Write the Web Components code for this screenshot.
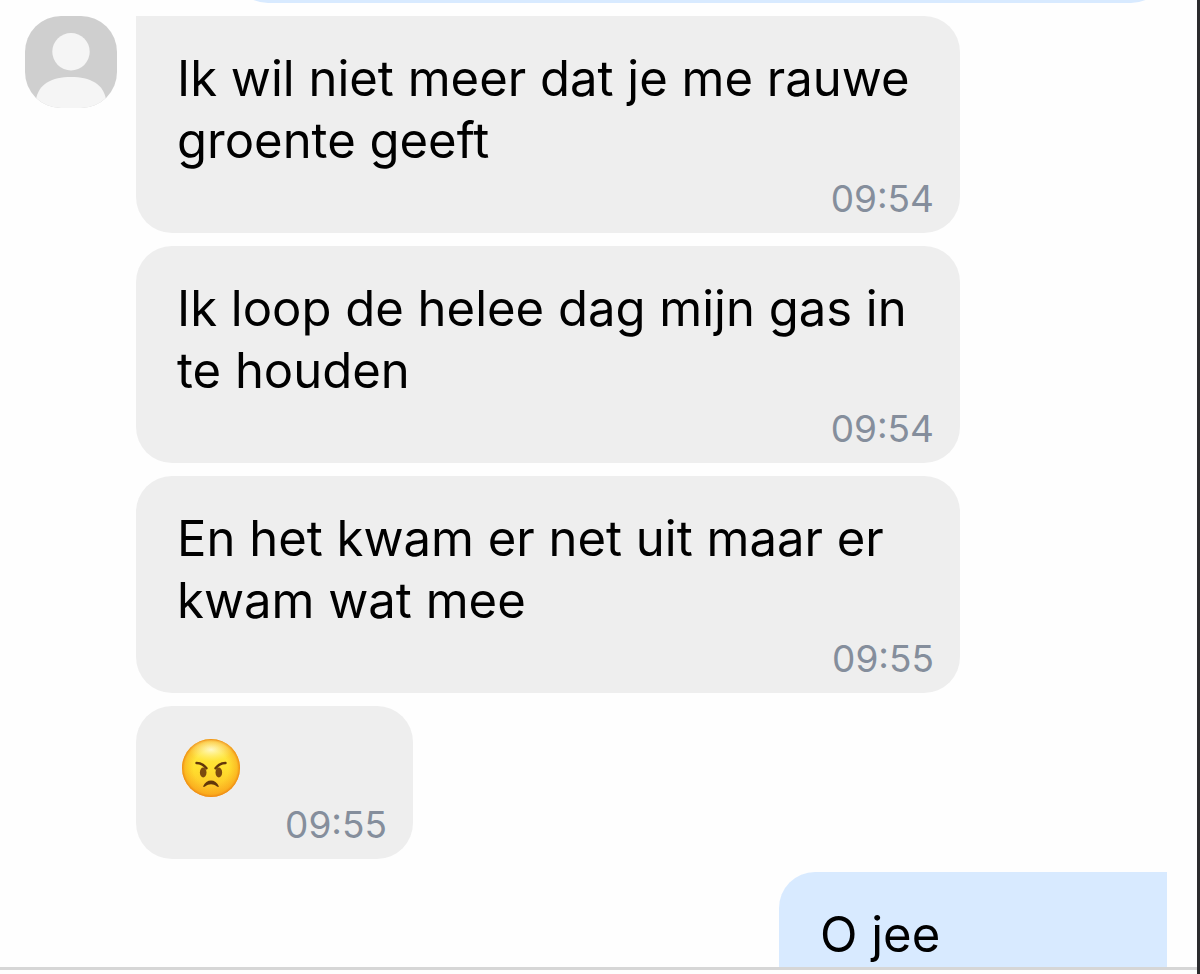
<!DOCTYPE html>
<html lang="nl">
<head>
<meta charset="utf-8">
<meta name="viewport" content="width=device-width, initial-scale=1">
<title>Chat</title>
<style>
  body {
    margin: 0;
    background: #fefefe;
    font-family: Inter, "Liberation Sans", sans-serif;
    color: #000;
  }
</style>
</head>
<body>
<chat-window>
  <chat-message side="sent" previous></chat-message>
  <chat-message side="received" first time="09:54">
    <user-avatar slot="avatar"></user-avatar>
    Ik wil niet meer dat je me rauwe groente geeft
  </chat-message>
  <chat-message side="received" time="09:54">Ik loop de helee dag mijn gas in te houden</chat-message>
  <chat-message side="received" time="09:55">En het kwam er net uit maar er kwam wat mee</chat-message>
  <chat-message side="received" short time="09:55"><angry-emoji></angry-emoji></chat-message>
  <chat-message side="sent" first short>O jee</chat-message>
</chat-window>

<script>
class ChatWindow extends HTMLElement {
  constructor() {
    super();
    this.attachShadow({ mode: "open" });
    this.shadowRoot.innerHTML = `
      <style>
        :host {
          display: flex;
          flex-direction: column;
          box-sizing: border-box;
          height: 100vh;
          border-right: 3px solid #2b2b2d;
        }
        .thread {
          flex: 1;
          min-height: 0;
          overflow: hidden;
          display: flex;
          flex-direction: column;
          gap: 13px;
        }
        footer {
          flex: none;
          height: 4px;
          border-top: 3px solid #d6d6d6;
        }
      </style>
      <main class="thread"><slot></slot></main>
      <footer></footer>
    `;
  }
}

class ChatMessage extends HTMLElement {
  constructor() {
    super();
    this.attachShadow({ mode: "open" });
    this.render();
  }

  render() {
    const time = this.getAttribute("time");
    this.shadowRoot.innerHTML = `
      <style>
        :host {
          display: flex;
          flex: none;
          gap: 19px;
          padding: 0 237px 0 25px;
        }
        .avatar {
          flex: none;
          width: 92px;
        }
        .bubble {
          flex: 1;
          display: flex;
          flex-direction: column;
          gap: 8px;
          box-sizing: border-box;
          min-height: 153px;
          padding: 32px 26px 15px 41px;
          border-radius: 36px;
          background: #eeeeee;
        }
        .text {
          font-size: 49px;
          line-height: 62px;
        }
        time {
          align-self: flex-end;
          font-size: 37px;
          line-height: 38px;
          color: #858e9c;
        }
        :host([first]) .bubble {
          border-top-left-radius: 0;
        }
        :host([short]) .bubble {
          flex: 0 0 277px;
        }
        :host([side="sent"]) {
          justify-content: flex-end;
          padding: 0 30px 0 232px;
        }
        :host([side="sent"]) .avatar {
          display: none;
        }
        :host([side="sent"]) .bubble {
          background: #d8eaff;
        }
        :host([side="sent"][short]) .bubble {
          flex-basis: 388px;
        }
        :host([side="sent"][first]) .bubble {
          border-radius: 36px 0 36px 36px;
        }
        /* scrolled out of view, only its lower edge shows */
        :host([previous]) {
          height: 3px;
          align-items: flex-end;
        }
      </style>
      <div class="avatar"><slot name="avatar"></slot></div>
      <div class="bubble">
        <div class="text"><slot></slot></div>
        ${time ? `<time>${time}</time>` : ""}
      </div>
    `;
  }
}

class UserAvatar extends HTMLElement {
  constructor() {
    super();
    this.attachShadow({ mode: "open" });
    this.shadowRoot.innerHTML = `
      <style>
        :host {
          display: block;
          height: 92px;
          border-radius: 36px;
          overflow: hidden;
          background: #cfcfcf;
        }
        svg { display: block; }
      </style>
      <svg width="92" height="92" viewBox="0 0 92 92" fill="#f5f5f5" aria-hidden="true">
        <circle cx="46" cy="35.700" r="18.700"/>
        <path d="M11 92V84C13 68 27 61 46 61S79 68 81 84V92Z"/>
      </svg>
    `;
  }
}

class AngryEmoji extends HTMLElement {
  constructor() {
    super();
    this.attachShadow({ mode: "open" });
    this.shadowRoot.innerHTML = `
      <style>
        :host {
          display: block;
          padding-left: 4px;
        }
        svg { display: block; }
      </style>
      <svg width="60" height="60" viewBox="0 0 60 60" role="img" aria-label="😠">
        <defs>
          <linearGradient id="face" x1="0" y1="0" x2="0" y2="1">
            <stop offset="0" stop-color="#ffef55"/>
            <stop offset=".5" stop-color="#ffe02f"/>
            <stop offset="1" stop-color="#fdb925"/>
          </linearGradient>
          <radialGradient id="rim" cx=".5" cy=".5" r=".5">
            <stop offset=".6" stop-color="#f9a01b" stop-opacity="0"/>
            <stop offset=".9" stop-color="#f79a16" stop-opacity=".5"/>
            <stop offset="1" stop-color="#ea7d10" stop-opacity=".9"/>
          </radialGradient>
          <radialGradient id="shine" cx=".5" cy=".4" r=".5">
            <stop offset="0" stop-color="#fff" stop-opacity=".7"/>
            <stop offset="1" stop-color="#fff59a" stop-opacity="0"/>
          </radialGradient>
        </defs>
        <circle cx="30" cy="30" r="29" fill="url(#face)"/>
        <circle cx="30" cy="30" r="29" fill="url(#rim)"/>
        <ellipse cx="30" cy="14" rx="22" ry="12" fill="url(#shine)"/>
        <ellipse cx="22.200" cy="34.500" rx="3.300" ry="4.900" fill="#7d4a0e"/>
        <ellipse cx="37.800" cy="34.500" rx="3.300" ry="4.900" fill="#7d4a0e"/>
        <g fill="none" stroke="#62370a" stroke-width="2.400" stroke-linecap="round">
          <path d="M15.500 25C20 25 23 27 25.500 30.200"/>
          <path d="M44.500 25C40 25 37 27 34.500 30.200"/>
        </g>
        <path d="M22.300 48C25 40.500 35 40.500 37.700 48C38 49.500 36.500 49 36 48.500C32 45.500 28 45.500 24 48.500C23.500 49 22 49.500 22.300 48Z" fill="#62370a"/>
      </svg>
    `;
  }
}

customElements.define("chat-window", ChatWindow);
customElements.define("chat-message", ChatMessage);
customElements.define("user-avatar", UserAvatar);
customElements.define("angry-emoji", AngryEmoji);
</script>
</body>
</html>
